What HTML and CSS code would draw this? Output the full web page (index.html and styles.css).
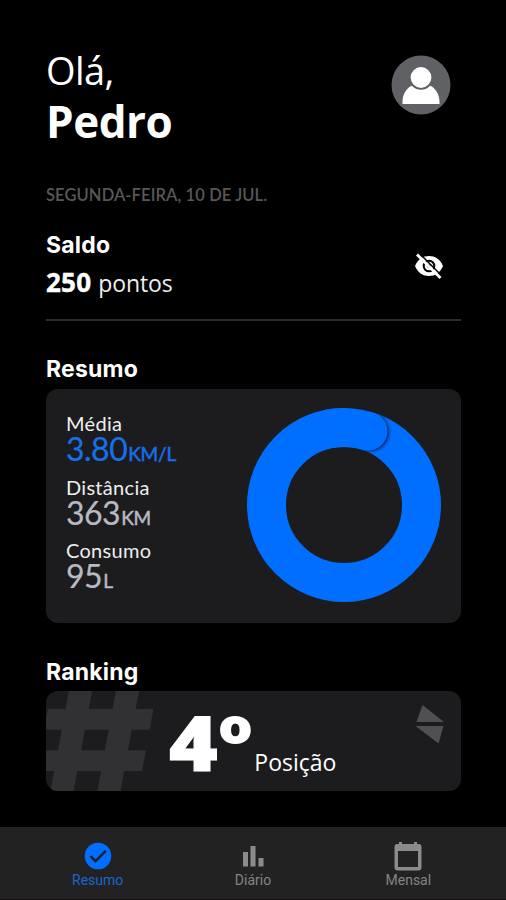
FILE: index.html
```html
<!DOCTYPE html>
<html lang="pt-BR">
<head>
<meta charset="utf-8">
<meta name="viewport" content="width=device-width, initial-scale=1">
<title>Resumo</title>
<link rel="stylesheet" href="styles.css">
</head>
<body>
<div class="app">
  <main class="content">
    <header class="header">
      <h1 class="greeting"><span class="hello">Olá,</span><span class="name">Pedro</span></h1>
      <svg class="avatar" viewBox="0 0 60 60"><circle cx="30" cy="30" r="29.5" fill="#5f6165"/><path d="M11.500 49V46C12 38 16 33 21 30.500Q30 37 39 30.500C44 33 48 38 48.500 46V49Z" fill="#fff"/><circle cx="30" cy="22.500" r="11.300" fill="#fff" stroke="#5f6165" stroke-width="1.800"/></svg>
    </header>
    <p class="date">SEGUNDA-FEIRA, 10 DE JUL.</p>
    <section class="balance">
      <div>
        <h2 class="title title-saldo">Saldo</h2>
        <p class="points"><strong>250</strong><span>pontos</span></p>
      </div>
      <svg class="eye" viewBox="0 0 30 30"><path d="M1 15C4 8 9 5 15 5s11 3 14 10c-3 7-8 10-14 10S4 22 1 15Z" fill="#fff"/><circle cx="15" cy="15" r="5.300" fill="none" stroke="#000" stroke-width="2"/><circle cx="15" cy="15" r="2" fill="#000"/><path d="M4.500 1.500L28.500 25.500" stroke="#000" stroke-width="1.500"/><path d="M3 3.500L26.500 27" stroke="#fff" stroke-width="2.800"/></svg>
    </section>
    <h2 class="title title-resumo">Resumo</h2>
    <section class="card summary">
      <dl class="stats">
        <div class="stat accent"><dt>Média</dt><dd><span>3.80</span><small>KM/L</small></dd></div>
        <div class="stat"><dt>Distância</dt><dd><span>363</span><small>KM</small></dd></div>
        <div class="stat"><dt>Consumo</dt><dd><span>95</span><small>L</small></dd></div>
      </dl>
      <svg class="ring" viewBox="0 0 194 194">
        <defs>
          <clipPath id="band"><path clip-rule="evenodd" d="M0 97a97 97 0 1 0 194 0a97 97 0 1 0-194 0ZM39 97a58 58 0 1 0 116 0a58 58 0 1 0-116 0Z"/></clipPath>
          <filter id="soft" x="-50%" y="-50%" width="200%" height="200%"><feGaussianBlur stdDeviation="1.500"/></filter>
        </defs>
        <circle cx="97" cy="97" r="77.500" fill="none" stroke="#006eff" stroke-width="39"/>
        <g clip-path="url(#band)">
          <circle cx="122.500" cy="24" r="19.500" fill="#00245c" filter="url(#soft)"/>
          <path d="M82 0H97L127 5V43L97 40H82Z" fill="#006eff" transform="rotate(-2 97 97)"/>
          <circle cx="121" cy="23.300" r="19.500" fill="#006eff"/>
        </g>
      </svg>
    </section>
    <h2 class="title title-ranking">Ranking</h2>
    <section class="card ranking">
      <span class="hash">#</span>
      <p class="place"><strong>4</strong><b>º</b><span>Posição</span></p>
      <svg class="arrows" viewBox="0 0 30 40"><path d="M7.500 1L29 18H1.500ZM.5 22H28.500L23.500 39.500Z" fill="#505052"/></svg>
    </section>
  </main>
  <nav class="tabs">
    <a class="tab active"><svg viewBox="0 0 30 30"><circle cx="15" cy="15" r="13.300" fill="#006eff"/><path d="M7.500 15.200L12.500 20.200L22.700 9.800" fill="none" stroke="#222" stroke-width="2.500"/></svg><span>Resumo</span></a>
    <a class="tab"><svg viewBox="0 0 30 30"><path d="M5 11h5v14.500H5ZM12.500 5h5v20.500h-5ZM20.500 17h5v8.500h-5Z" fill="#8b8b8b"/></svg><span>Diário</span></a>
    <a class="tab"><svg viewBox="0 0 30 30"><path fill="#8b8b8b" fill-rule="evenodd" d="M6 1h3v2h12V1h3v2h1.500a3 3 0 0 1 3 3v20.500a3 3 0 0 1-3 3h-21a3 3 0 0 1-3-3V6a3 3 0 0 1 3-3H6ZM5 10v16h20V10Z"/></svg><span>Mensal</span></a>
  </nav>
</div>
</body>
</html>
```
FILE: styles.css
```css
* { box-sizing: border-box; }
body, h1, h2, p, dl, dd { margin: 0; }
body { background: #000; color: #fff; }
svg { display: block; flex: none; }
.app { height: 900px; display: flex; flex-direction: column; overflow: hidden; }
.content { flex: 1; padding: 46px 45px 0 46px; }
.header { display: flex; justify-content: space-between; height: 139px; }
.greeting { font-family: "Open Sans", sans-serif; display: flex; flex-direction: column; }
.hello { font-size: 38px; font-weight: 500; line-height: 48px; letter-spacing: -.6px; }
.name { font-size: 44px; font-weight: 700; line-height: 55px; letter-spacing: -.5px; }
.avatar { width: 60px; height: 60px; margin: 9px 10px 0 0; }
.date { font: 600 16.5px/20px Lato, sans-serif; letter-spacing: .1px; color: #585858; white-space: nowrap; }
.balance { display: flex; justify-content: space-between; margin-top: 26px; height: 90px; border-bottom: 2px solid #2b2b2d; }
.title { font: 700 23px/28px Inter, sans-serif; letter-spacing: .2px; width: max-content; }
.points { display: flex; align-items: baseline; gap: 7px; margin-top: 5px; font: 400 23px/36px "Open Sans", sans-serif; }
.points strong { font-size: 26px; font-weight: 700; letter-spacing: .2px; -webkit-text-stroke: .4px; }
.points span { color: #eee; letter-spacing: -.1px; }
.eye { width: 30px; height: 30px; margin: 20px 17px 0 0; }
.title-resumo { margin-top: 34px; }
.title-ranking { margin-top: 35px; }
.card { background: #1c1c1e; border-radius: 12px; overflow: hidden; }
.summary { display: flex; justify-content: space-between; height: 234px; margin-top: 6px; padding: 19px 20px 0; }
.stats { padding-top: 3px; font-family: Lato, sans-serif; }
.stat { height: 63.5px; color: #b9b9c2; }
.stat dt { font-size: 20px; line-height: 24px; letter-spacing: .3px; color: #eee; width: max-content; }
.stat dd { display: flex; align-items: baseline; gap: 1px; font-size: 32px; line-height: 28px; -webkit-text-stroke: .2px; letter-spacing: -.5px; }
.stat small { font-size: 19px; font-weight: 400; letter-spacing: -.2px; -webkit-text-stroke: .5px; }
.accent { color: #1670e8; }
.ring { width: 194px; height: 194px; }
.ranking { display: flex; height: 100px; margin-top: 5px; }
.hash { font: 800 164px/100px Inter, sans-serif; color: #313133; width: 123px; height: 100px; text-indent: -10px; flex: none; transform: scaleX(1.12); transform-origin: left; }
.place { display: flex; align-items: baseline; font: 500 23px/102px "Open Sans", sans-serif; height: 100px; }
.place strong { font-size: 77px; font-weight: 800; -webkit-text-stroke: 1px; transform: scaleX(1.08); transform-origin: left; }
.place b { font-size: 77px; font-weight: 800; margin-left: 4px; transform: scaleX(1.15); transform-origin: left; }
.place span { margin-left: 6px; }
.arrows { width: 30px; height: 40px; margin: 13px 16px 0 auto; }
.tabs { display: grid; grid-template-columns: repeat(3, 1fr); padding: 14px 20px 0; height: 73px; background: #222; border-bottom: 1px solid #160e11; }
.tab { display: flex; flex-direction: column; align-items: center; color: #858585; font: 400 14px/18px Roboto, sans-serif; }
.tab svg { width: 30px; height: 30px; }
.active { color: #1966cf; }
```
